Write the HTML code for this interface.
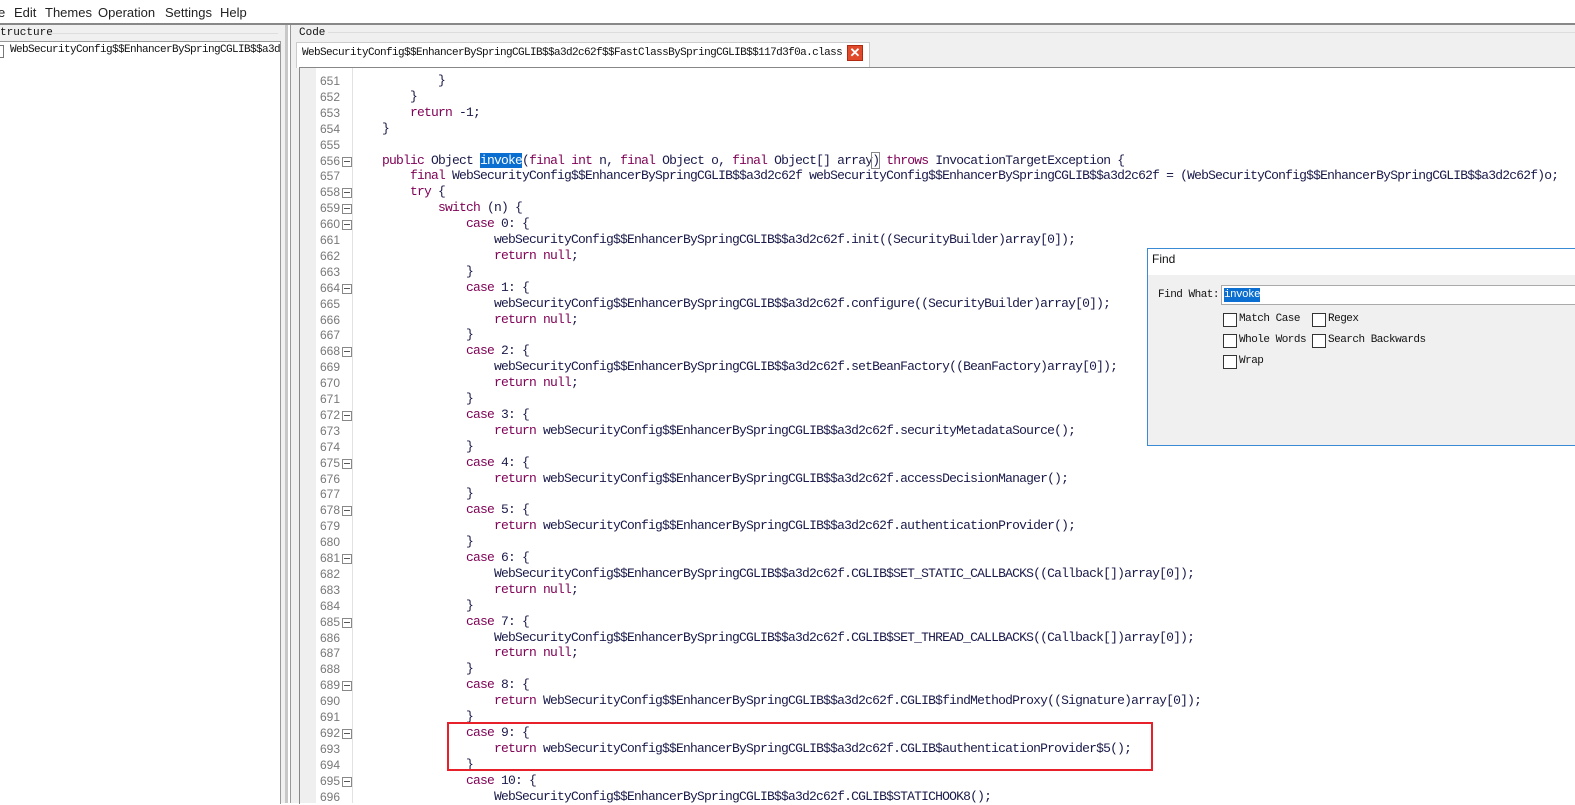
<!DOCTYPE html>
<html><head><meta charset="utf-8"><style>
body{margin:0;width:1575px;height:803px;overflow:hidden;background:#fff;font-family:"Liberation Sans",sans-serif;position:relative}
.abs{position:absolute}
.menu{left:0;top:0;width:1575px;height:23px;font-size:13px;color:#222;background:#fff}
.menu span{position:absolute;top:5px}
.mono{font-family:"Liberation Mono",monospace}
.code div{position:absolute;height:16px;line-height:16px;font-size:13px;white-space:pre;color:#1a1a4a;font-family:"Liberation Mono",monospace;letter-spacing:-0.8px}
.k{color:#7f0055}
.ln{position:absolute;left:318px;width:22px;font-size:12px;color:#787878;text-align:right;height:16px;line-height:16px}
.fold{position:absolute;left:342px;width:8px;height:8px;border:1px solid #888;background:#fff}
.fold:after{content:"";position:absolute;left:1px;top:3px;width:6px;height:1px;background:#555}
.cb{position:absolute;width:12px;height:12px;border:1px solid #333;background:#fff}
.lbl{position:absolute;font-size:11px;font-family:"Liberation Mono",monospace;color:#111;letter-spacing:-0.5px}
</style></head><body>
<div class="abs menu"><span style="left:-2px">e</span><span style="left:14px">Edit</span><span style="left:45px">Themes</span><span style="left:98px">Operation</span><span style="left:165px">Settings</span><span style="left:220px">Help</span></div>
<div class="abs" style="left:0;top:23px;width:1575px;height:2px;background:#888"></div>
<div class="abs" style="left:0;top:25px;width:288px;height:778px;background:#f0f0f0"></div>
<div class="abs mono" style="left:0;top:27px;font-size:11px;color:#111;">tructure</div>
<div class="abs" style="left:50px;top:33px;width:228px;height:1px;background:#ddd"></div>
<div class="abs" style="left:0;top:41px;width:280px;height:762px;background:#fff;border-right:1px solid #999;border-top:1px solid #999"></div>
<div class="abs" style="left:0;top:45px;width:3px;height:11px;border:1px solid #777;border-left:none"></div>
<div class="abs mono" style="left:10px;top:44px;font-size:11px;color:#111;letter-spacing:-0.6px">WebSecurityConfig$$EnhancerBySpringCGLIB$$a3d</div>
<div class="abs" style="left:285px;top:25px;width:3px;height:778px;background:#c8c8c8"></div>
<div class="abs" style="left:290px;top:25px;width:1285px;height:778px;background:#f0f0f0;border-left:1px solid #999"></div>
<div class="abs mono" style="left:299px;top:27px;font-size:11px;color:#111">Code</div>
<div class="abs" style="left:328px;top:32px;width:1247px;height:1px;background:#ddd"></div>
<div class="abs" style="left:296px;top:42px;width:572px;height:25px;background:#fff;border:1px solid #ccc;border-bottom:none"></div>
<div class="abs mono" style="left:302px;top:47px;font-size:11px;color:#111;letter-spacing:-0.6px">WebSecurityConfig$$EnhancerBySpringCGLIB$$a3d2c62f$$FastClassBySpringCGLIB$$117d3f0a.class</div>
<div class="abs" style="left:847px;top:45px;width:14px;height:14px;background:#e04a2a;border:1px solid #b02a10;color:#fff;font-size:13px;line-height:14px;text-align:center;font-weight:bold">✕</div>
<div class="abs" style="left:299px;top:67px;width:1276px;height:736px;background:#fff;border-top:1px solid #888;border-left:1px solid #888"></div>
<div class="abs" style="left:300px;top:68px;width:16px;height:735px;background:#efefef"></div>
<div class="abs" style="left:352px;top:68px;width:1px;height:735px;background:#e2e2e2"></div>
<div class="code" id="c"></div>
<div class="abs" style="left:447px;top:722px;width:702px;height:45px;border:2px solid #e8202a"></div>
<div class="abs" style="left:1147px;top:248px;width:428px;height:196px;background:#f0f0f0;border:1px solid #3a8ad6;border-right:none"></div>
<div class="abs" style="left:1148px;top:249px;width:427px;height:26px;background:#fff"></div>
<div class="abs" style="left:1152px;top:252px;font-size:12px;color:#111">Find</div>
<div class="lbl" style="left:1158px;top:289px">Find What:</div>
<div class="abs" style="left:1221px;top:285px;width:354px;height:18px;background:#fff;border:1px solid #aaa;border-right:none"></div>
<div class="abs" style="left:1224px;top:288px;height:14px;background:#0a6fd0;color:#fff;font-size:11px;font-family:'Liberation Mono',monospace;letter-spacing:-0.6px;line-height:14px">invoke</div>
<div class="cb" style="left:1223px;top:313px"></div><div class="lbl" style="left:1239px;top:313px">Match Case</div>
<div class="cb" style="left:1312px;top:313px"></div><div class="lbl" style="left:1328px;top:313px">Regex</div>
<div class="cb" style="left:1223px;top:334px"></div><div class="lbl" style="left:1239px;top:334px">Whole Words</div>
<div class="cb" style="left:1312px;top:334px"></div><div class="lbl" style="left:1328px;top:334px">Search Backwards</div>
<div class="cb" style="left:1223px;top:355px"></div><div class="lbl" style="left:1239px;top:355px">Wrap</div>
<script>
var L=[
[651,3,'}',0],[652,2,'}',0],[653,2,'<k>return</k> -1;',0],[654,1,'}',0],[655,0,'',0],
[656,1,'<k>public</k> Object <span style="background:#0a6fd0;color:#fff">invoke</span>(<k>final</k> <k>int</k> n, <k>final</k> Object o, <k>final</k> Object[] array<span style="outline:1px solid #888">)</span> <k>throws</k> InvocationTargetException {',1],
[657,2,'<k>final</k> WebSecurityConfig$$EnhancerBySpringCGLIB$$a3d2c62f webSecurityConfig$$EnhancerBySpringCGLIB$$a3d2c62f = (WebSecurityConfig$$EnhancerBySpringCGLIB$$a3d2c62f)o;',0],
[658,2,'<k>try</k> {',1],[659,3,'<k>switch</k> (n) {',1],[660,4,'<k>case</k> 0: {',1],
[661,5,'webSecurityConfig$$EnhancerBySpringCGLIB$$a3d2c62f.init((SecurityBuilder)array[0]);',0],[662,5,'<k>return</k> <k>null</k>;',0],[663,4,'}',0],
[664,4,'<k>case</k> 1: {',1],[665,5,'webSecurityConfig$$EnhancerBySpringCGLIB$$a3d2c62f.configure((SecurityBuilder)array[0]);',0],[666,5,'<k>return</k> <k>null</k>;',0],[667,4,'}',0],
[668,4,'<k>case</k> 2: {',1],[669,5,'webSecurityConfig$$EnhancerBySpringCGLIB$$a3d2c62f.setBeanFactory((BeanFactory)array[0]);',0],[670,5,'<k>return</k> <k>null</k>;',0],[671,4,'}',0],
[672,4,'<k>case</k> 3: {',1],[673,5,'<k>return</k> webSecurityConfig$$EnhancerBySpringCGLIB$$a3d2c62f.securityMetadataSource();',0],[674,4,'}',0],
[675,4,'<k>case</k> 4: {',1],[676,5,'<k>return</k> webSecurityConfig$$EnhancerBySpringCGLIB$$a3d2c62f.accessDecisionManager();',0],[677,4,'}',0],
[678,4,'<k>case</k> 5: {',1],[679,5,'<k>return</k> webSecurityConfig$$EnhancerBySpringCGLIB$$a3d2c62f.authenticationProvider();',0],[680,4,'}',0],
[681,4,'<k>case</k> 6: {',1],[682,5,'WebSecurityConfig$$EnhancerBySpringCGLIB$$a3d2c62f.CGLIB$SET_STATIC_CALLBACKS((Callback[])array[0]);',0],[683,5,'<k>return</k> <k>null</k>;',0],[684,4,'}',0],
[685,4,'<k>case</k> 7: {',1],[686,5,'WebSecurityConfig$$EnhancerBySpringCGLIB$$a3d2c62f.CGLIB$SET_THREAD_CALLBACKS((Callback[])array[0]);',0],[687,5,'<k>return</k> <k>null</k>;',0],[688,4,'}',0],
[689,4,'<k>case</k> 8: {',1],[690,5,'<k>return</k> WebSecurityConfig$$EnhancerBySpringCGLIB$$a3d2c62f.CGLIB$findMethodProxy((Signature)array[0]);',0],[691,4,'}',0],
[692,4,'<k>case</k> 9: {',1],[693,5,'<k>return</k> webSecurityConfig$$EnhancerBySpringCGLIB$$a3d2c62f.CGLIB$authenticationProvider$5();',0],[694,4,'}',0],
[695,4,'<k>case</k> 10: {',1],[696,5,'WebSecurityConfig$$EnhancerBySpringCGLIB$$a3d2c62f.CGLIB$STATICHOOK8();',0]];
var h='';L.forEach(function(l,i){var y=73+i*15.9;
h+='<span class="ln" style="top:'+y+'px">'+l[0]+'</span>';
if(l[3])h+='<span class="fold" style="top:'+(y+4)+'px"></span>';
h+='<div style="left:'+(354+l[1]*28)+'px;top:'+y+'px">'+l[2].replace(/<k>/g,'<span class="k">').replace(/<\/k>/g,'</span>')+'</div>';});
document.getElementById('c').innerHTML=h;
</script>
</body></html>
